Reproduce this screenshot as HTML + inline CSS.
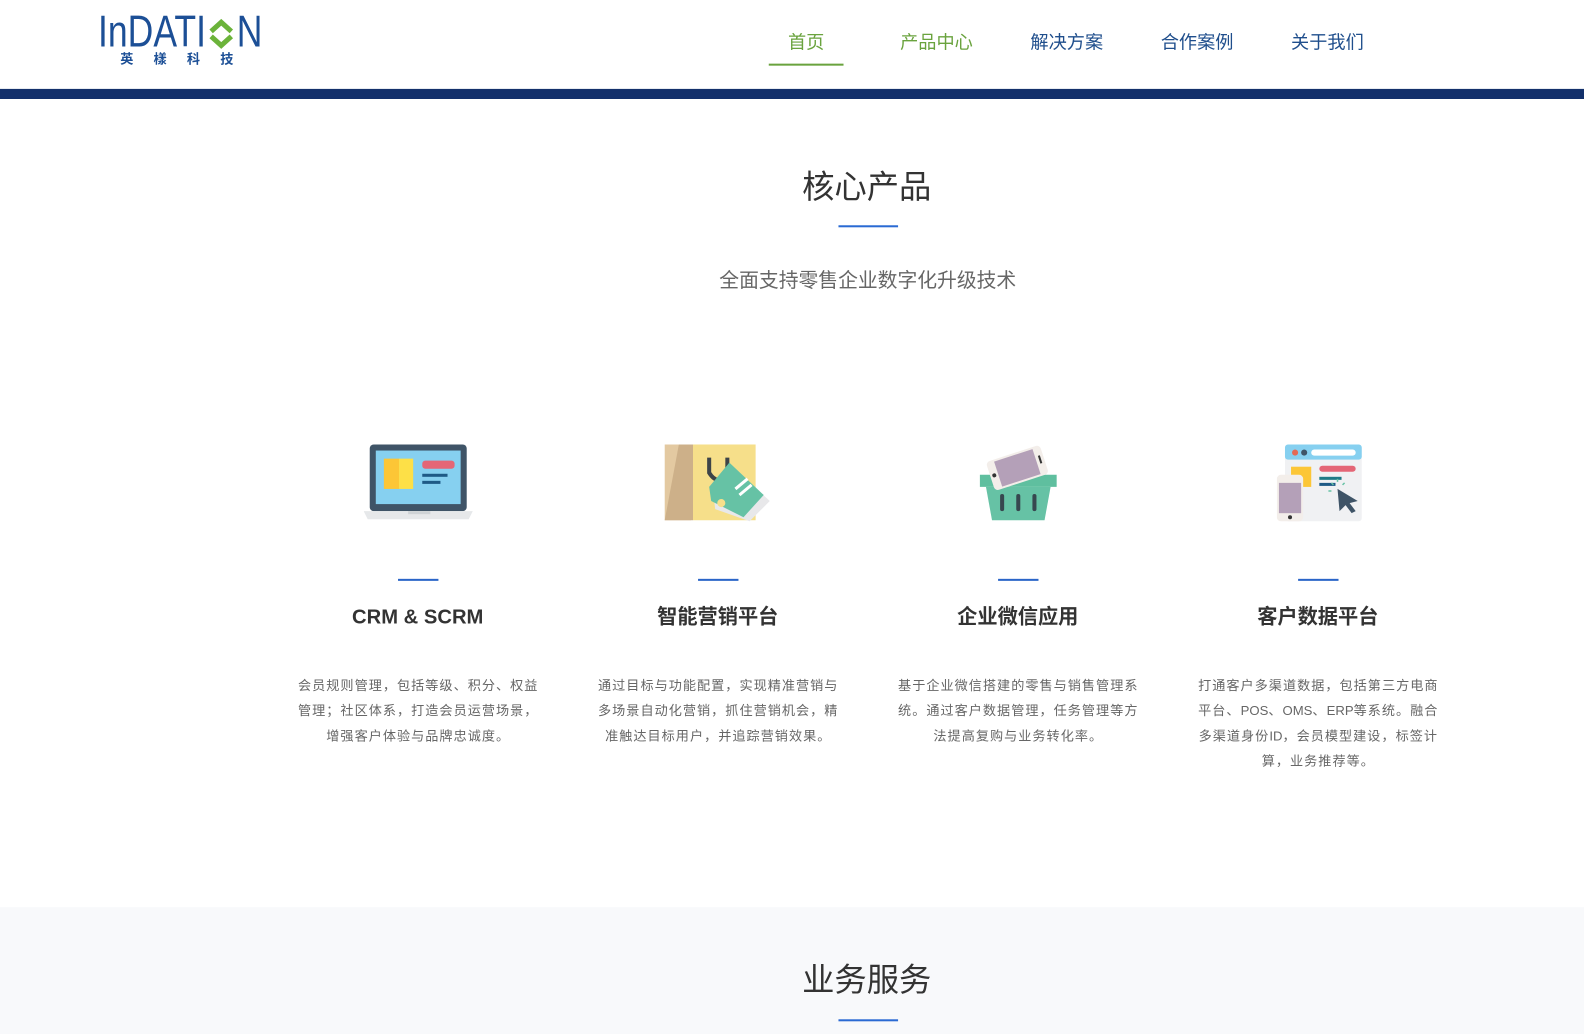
<!DOCTYPE html>
<html><head><meta charset="utf-8"><style>
*{margin:0;padding:0;box-sizing:border-box}
body{width:1584px;height:1024px;overflow:hidden;background:#fff;font-family:"Liberation Sans","Noto Sans CJK SC",sans-serif;position:relative}
#w{position:absolute;left:0;top:0;width:1568px;height:1014px;transform:scale(1.0102);transform-origin:0 0}
.a{position:absolute}
.nav{position:absolute;top:30px;font-size:18px;width:100px;text-align:center;line-height:24px}
.ttl{position:absolute;font-size:20px;font-weight:bold;color:#333;width:297px;text-align:center;top:598px;line-height:26px}
.desc{position:absolute;top:666px;width:260px;font-size:13px;line-height:25px;color:#666;text-align:center;white-space:nowrap}
.desc span{letter-spacing:1px}
.bl{position:absolute;top:573px;width:40px;height:2px;background:#2a65c8}
</style></head><body><div id="w">
<!-- logo -->
<div class="a" style="left:97px;top:10px;font-size:44px;line-height:44px;color:#1c4f96;font-family:'Liberation Sans',sans-serif;transform:scaleX(0.8);transform-origin:left;white-space:nowrap">InDATI<span style="display:inline-block;width:38px"></span>N</div>
<svg class="a" style="left:206px;top:17px" width="26" height="32" viewBox="0 0 26 32"><path d="M3 14 L13 5 L23 14" stroke="#6bb33a" stroke-width="5" fill="none"/><path d="M3 19 L13 28 L23 19" stroke="#6bb33a" stroke-width="5" fill="none"/></svg>
<div class="a" style="left:119px;top:51px;font-size:13px;font-weight:bold;color:#1c4f96;letter-spacing:20px;line-height:16px">英樣科技</div>
<!-- nav -->
<div class="nav" style="left:748px;color:#6aa33e">首页</div>
<div class="a" style="left:761px;top:63px;width:74px;height:2px;background:#6aa33e"></div>
<div class="nav" style="left:877px;color:#6aa33e">产品中心</div>
<div class="nav" style="left:1006px;color:#1f4e8c">解决方案</div>
<div class="nav" style="left:1135px;color:#1f4e8c">合作案例</div>
<div class="nav" style="left:1264px;color:#1f4e8c">关于我们</div>
<div class="a" style="left:0;top:88px;width:1584px;height:10px;background:#13306b"></div>
<!-- section -->
<div class="a" style="left:0;top:163px;width:1716px;text-align:center;font-size:32px;color:#333;line-height:44px">核心产品</div>
<div class="a" style="left:830px;top:223px;width:59px;height:2px;background:#2a6ad3"></div>
<div class="a" style="left:0;top:265px;width:1718px;text-align:center;font-size:19.6px;color:#666;line-height:26px">全面支持零售企业数字化升级技术</div>
<!-- icons -->
<svg class="a" style="left:360px;top:438px" width="110" height="80" viewBox="0 0 110 80">
<rect x="6" y="2" width="96" height="66" rx="4" fill="#3f5467"/><rect x="12" y="8" width="84" height="53" fill="#86d0f0"/>
<rect x="20" y="16" width="15" height="30" fill="#fcc636"/><rect x="35" y="16" width="14" height="30" fill="#fde047"/>
<rect x="58" y="18" width="32" height="8" rx="3" fill="#e46676"/><rect x="58" y="31" width="25" height="3" fill="#1e5a86"/><rect x="58" y="38" width="18" height="3" fill="#1e5a86"/>
<path d="M0 68 H108 L104 76 H4 Z" fill="#e6e8ea"/><rect x="44" y="68" width="22" height="3" fill="#cfd3d6"/></svg>
<svg class="a" style="left:656px;top:438px" width="110" height="80" viewBox="0 0 110 80">
<path d="M2 2 H28 V77 H2 Z" fill="#e3c9a1"/><path d="M16 2 H30 V77 H2 Z" fill="#cdb089"/><rect x="30" y="2" width="62" height="75" fill="#f6df8a"/>
<path d="M46 15 V30 Q55 44 64 30 V15" stroke="#3d4448" stroke-width="4" fill="none"/>
<path d="M70 24 L106 58 L86 78 L52 66 L50 50 Z" fill="#e8e8ea"/>
<path d="M66 20 L100 52 L80 74 L48 58 L46 44 Z" fill="#66c2a5"/><circle cx="58" cy="60" r="4" fill="#f6df8a"/>
<path d="M72 46 L84 36 M76 52 L88 42" stroke="#fff" stroke-width="3"/></svg>
<svg class="a" style="left:968px;top:438px" width="80" height="80" viewBox="0 0 80 80">
<path d="M2 32 H78 V44 H2 Z" fill="#5fbf9f"/><path d="M8 44 H72 L66 77 H14 Z" fill="#66c2a5"/>
<g transform="rotate(-18 40 28)"><rect x="12" y="10" width="56" height="30" rx="4" fill="#f3eeea"/><rect x="20" y="12" width="40" height="26" fill="#b4a0b8"/><circle cx="16" cy="25" r="2" fill="#333"/><rect x="63" y="20" width="2" height="8" fill="#333"/></g>
<rect x="22" y="51" width="4" height="17" rx="2" fill="#37474f"/><rect x="38" y="51" width="4" height="17" rx="2" fill="#37474f"/><rect x="54" y="51" width="4" height="17" rx="2" fill="#37474f"/></svg>
<svg class="a" style="left:1262px;top:438px" width="90" height="82" viewBox="0 0 90 82">
<rect x="10" y="2" width="76" height="76" rx="3" fill="#f0f1f3"/><rect x="10" y="2" width="76" height="15" rx="3" fill="#86d0f0"/>
<circle cx="20" cy="10" r="3" fill="#e46a55"/><circle cx="29" cy="10" r="3" fill="#3f5467"/><rect x="36" y="7" width="44" height="6" rx="3" fill="#fff"/>
<rect x="16" y="24" width="20" height="20" fill="#fcc636"/><rect x="44" y="23" width="36" height="6" rx="3" fill="#e46676"/><rect x="44" y="34" width="22" height="3" fill="#1e7a86"/><rect x="44" y="40" width="16" height="3" fill="#1e5a86"/>
<rect x="2" y="32" width="26" height="46" rx="4" fill="#f3eeea"/><rect x="4" y="40" width="22" height="30" fill="#b4a0b8"/><circle cx="15" cy="74" r="2" fill="#333"/>
<path d="M62 46 L82 58 L74 60 L80 68 L76 70 L70 62 L64 68 Z" fill="#3f5467"/>
<g stroke="#66c2a5" stroke-width="1.5"><path d="M58 42 L56 40 M62 39 V36 M67 42 L69 40 M56 48 H53"/></g></svg>
<!-- columns -->
<div class="bl" style="left:394px"></div><div class="bl" style="left:691px"></div><div class="bl" style="left:988px"></div><div class="bl" style="left:1285px"></div>
<div class="ttl" style="left:265px;top:598px">CRM &amp; SCRM</div>
<div class="ttl" style="left:562px">智能营销平台</div>
<div class="ttl" style="left:859px">企业微信应用</div>
<div class="ttl" style="left:1156px">客户数据平台</div>
<div class="desc" style="left:284px"><span>会员规则管理，包括等级、积分、权益</span><br><span>管理；社区体系，打造会员运营场景，</span><br><span>增强客户体验与品牌忠诚度。</span></div>
<div class="desc" style="left:581px"><span>通过目标与功能配置，实现精准营销与</span><br><span>多场景自动化营销，抓住营销机会，精</span><br><span>准触达目标用户，并追踪营销效果。</span></div>
<div class="desc" style="left:878px"><span>基于企业微信搭建的零售与销售管理系</span><br><span>统。通过客户数据管理，任务管理等方</span><br><span>法提高复购与业务转化率。</span></div>
<div class="desc" style="left:1175px"><span>打通客户多渠道数据，包括第三方电商</span><br><span>平台、</span>POS<span>、</span>OMS<span>、</span>ERP<span>等系统。融合</span><br><span>多渠道身份</span>ID<span>，会员模型建设，标签计</span><br><span>算，业务推荐等。</span></div>
<!-- second section -->
<div class="a" style="left:0;top:898px;width:1584px;height:126px;background:#f8f9fb"></div>
<div class="a" style="left:0;top:948px;width:1716px;text-align:center;font-size:32px;color:#333;line-height:44px">业务服务</div>
<div class="a" style="left:830px;top:1009px;width:59px;height:2px;background:#2a6ad3"></div>
</div></body></html>
